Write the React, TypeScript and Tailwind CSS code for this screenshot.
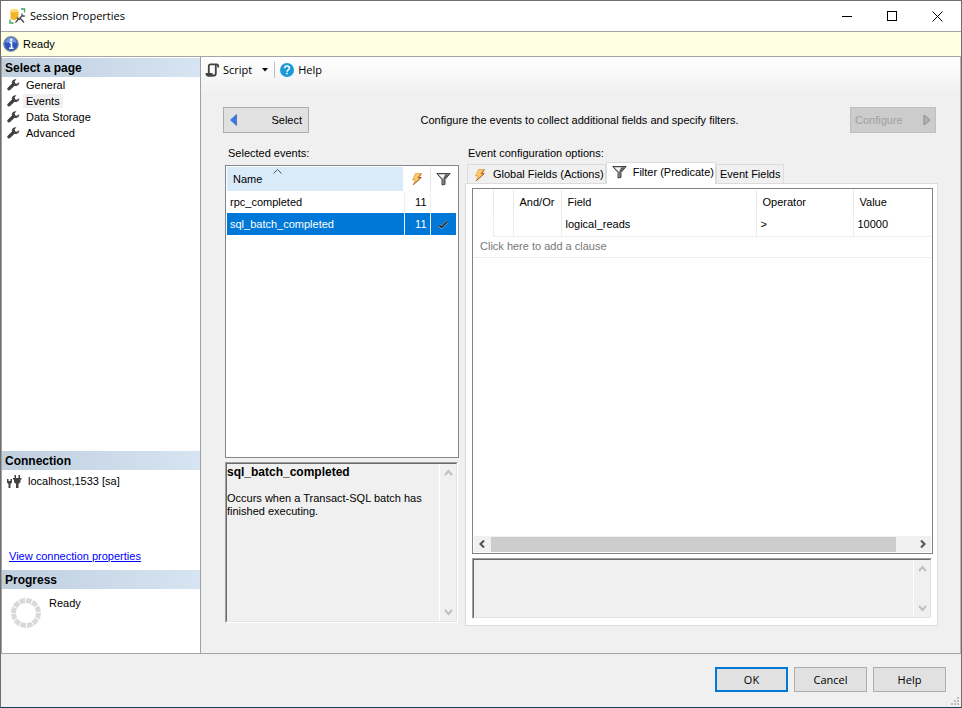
import { useState } from "react";
import clsx from "clsx";

const pages = ["General", "Events", "Data Storage", "Advanced"];

const selectedEvents = [
  { name: "rpc_completed", fields: 11, filtered: false },
  { name: "sql_batch_completed", fields: 11, filtered: true },
];

const clauses = [{ andOr: "", field: "logical_reads", operator: ">", value: "10000" }];

const tabs = [
  { id: "global", label: "Global Fields (Actions)", icon: <BoltIcon /> },
  { id: "filter", label: "Filter (Predicate)", icon: <FunnelIcon /> },
  { id: "fields", label: "Event Fields", icon: null },
];

export default function App() {
  return (
    <div className="flex min-h-screen flex-col border border-[#6e6e6e] border-b-[#1d3f55] bg-[#f0f0f0] font-['Liberation_Sans',Arial,sans-serif] text-[11px] leading-[13px] text-black">
      <TitleBar />
      <div role="status" className="flex h-[26px] items-center gap-1 border-y border-[#a5a5a5] bg-[#ffffe1] px-0.5">
        <InfoIcon />
        <span>Ready</span>
      </div>
      <div className="flex grow border-b border-[#a5a5a5]">
        <Sidebar />
        <main className="flex min-w-0 grow flex-col border-r border-[#b5b5b5] bg-linear-to-b from-white to-[#f0f0f0] to-[38px] pb-[27px]">
          <Toolbar />
          <EventsPage />
        </main>
      </div>
      <Footer />
    </div>
  );
}

function TitleBar() {
  return (
    <header className="flex h-[30px] items-center bg-white pl-2">
      <SessionIcon />
      <h1 className="ml-1 grow font-['Open_Sans',sans-serif] text-[11px] leading-4">Session Properties</h1>
      <button aria-label="Minimize" className="flex h-[30px] w-[45px] items-center justify-center">
        <svg width="10" height="10" stroke="black" shapeRendering="crispEdges"><path d="M0 5.5h10" /></svg>
      </button>
      <button aria-label="Maximize" className="flex h-[30px] w-[45px] items-center justify-center">
        <svg width="10" height="10" stroke="black" fill="none" shapeRendering="crispEdges"><path d="M.5.5h9v9h-9z" /></svg>
      </button>
      <button aria-label="Close" className="flex h-[30px] w-[47px] items-center justify-center">
        <svg width="11" height="11" stroke="black"><path d="M.5.5l10 10M10.5.5l-10 10" /></svg>
      </button>
    </header>
  );
}

function SectionHeader({ children }: { children: React.ReactNode }) {
  return (
    <h2 className="h-[19px] bg-linear-to-r from-[#bfcfde] to-[#d7e4f2] pl-[3px] text-xs leading-[21px] font-bold">
      {children}
    </h2>
  );
}

function Sidebar() {
  const [page, setPage] = useState("Events");

  return (
    <aside className="flex w-[200px] shrink-0 flex-col border-x border-[#a0a0a0] bg-white pt-px">
      <SectionHeader>Select a page</SectionHeader>
      <nav className="grow">
        {pages.map((name) => (
          <button key={name} onClick={() => setPage(name)} className="flex h-4 w-full items-center gap-[3px] pl-[5px]">
            <WrenchIcon />
            <span className={clsx("px-[3px] leading-[14px]", page === name && "bg-[#f0f0f0]")}>{name}</span>
          </button>
        ))}
      </nav>

      <SectionHeader>Connection</SectionHeader>
      <div className="flex h-[100px] flex-col items-start justify-between pt-1 pb-[7px]">
        <p className="flex items-center gap-1.5 pl-[5px]">
          <PlugsIcon />
          <span>localhost,1533 [sa]</span>
        </p>
        <a href="#connection" className="pl-[7px] text-[#0000ff] underline">View connection properties</a>
      </div>

      <SectionHeader>Progress</SectionHeader>
      <div className="flex h-16 gap-[7px] pt-2 pl-2">
        <ProgressRing />
        <span>Ready</span>
      </div>
    </aside>
  );
}

function Toolbar() {
  return (
    <div className="flex h-[26px] items-center pl-1 font-['Open_Sans',sans-serif] text-[11px] leading-4">
      <button className="flex items-center gap-[3px]">
        <ScriptIcon />
        Script
        <svg width="7" height="4" className="ml-[7px]"><path d="M0 0h6L3 3.5z" /></svg>
      </button>
      <span className="mx-[5px] h-4 w-px bg-[#bdbdbd]" />
      <button className="flex items-center gap-1">
        <HelpIcon />
        Help
      </button>
    </div>
  );
}

function EventsPage() {
  return (
    <div className="flex grow flex-col pt-6 pr-[21px] pl-6">
      <div className="flex items-center justify-between">
        <button className="-ml-0.5 flex h-[26px] w-[86px] items-center justify-between border border-[#adadad] bg-[#e1e1e1] px-1.5">
          <svg width="7" height="12"><path d="M6.5.5v11L.5 6z" fill="#3b78e7" stroke="#2350b8" strokeWidth=".6" /></svg>
          Select
        </button>
        <p>Configure the events to collect additional fields and specify filters.</p>
        <button disabled className="mr-[3px] flex h-[26px] w-[86px] items-center justify-between border border-[#bfbfbf] bg-[#cccccc] px-1 text-[#a0a0a0]">
          Configure
          <svg width="8" height="12"><path d="M1 1v10l6-5z" fill="#b4b4b4" stroke="#8b8b8b" /></svg>
        </button>
      </div>

      <div className="flex grow gap-1.5 pt-3.5">
        <section className="flex w-[234px] shrink-0 flex-col">
          <h3 className="h-[18px] pl-[3px]">Selected events:</h3>
          <SelectedEvents />
          <DescriptionBox className="mt-1 mr-px mb-[3px] h-[161px]">
            <p className="text-xs leading-[13px] font-bold">sql_batch_completed</p>
            <p className="mt-[13px]">Occurs when a Transact-SQL batch has finished executing.</p>
          </DescriptionBox>
        </section>
        <section className="flex min-w-0 grow flex-col">
          <h3 className="h-[15px] pl-[3px]">Event configuration options:</h3>
          <ConfigTabs />
        </section>
      </div>
    </div>
  );
}

function SelectedEvents() {
  const [selected, setSelected] = useState("sql_batch_completed");

  return (
    <div className="grow border border-[#828790] bg-white p-px">
      <table className="w-[229px] table-fixed border-collapse">
        <thead>
          <tr className="h-6">
            <th className="relative bg-[#d9ebf9] pl-1.5 text-left font-normal">
              <svg width="9" height="5" className="absolute top-0.5 left-[46px]" fill="none" stroke="#555"><path d="M.5 4.5l4-4 4 4" /></svg>
              Name
            </th>
            <th className="w-[26px] border-l-2 border-white"><BoltIcon className="mx-auto" /></th>
            <th className="w-[26px] border-l border-[#e5e5e5]"><FunnelIcon className="mx-auto" /></th>
          </tr>
        </thead>
        <tbody>
          {selectedEvents.map((event) => (
            <tr
              key={event.name}
              onClick={() => setSelected(event.name)}
              className={clsx("h-[22px]", selected === event.name && "bg-[#0078d7] text-white")}
            >
              <td className="pl-[3px]">{event.name}</td>
              <td className="border-l border-[#f0f0f0] pr-[3px] text-right">{event.fields}</td>
              <td className="border-l border-[#f0f0f0]">{event.filtered && <CheckIcon />}</td>
            </tr>
          ))}
        </tbody>
      </table>
    </div>
  );
}

function DescriptionBox({ className, children }: { className?: string; children?: React.ReactNode }) {
  return (
    <div className={clsx("flex border border-[#a0a0a0] border-r-white border-b-white", className)}>
      <div className="flex grow border border-[#696969] border-r-[#e3e3e3] border-b-[#e3e3e3]">
        <div className="grow pt-0.5">{children}</div>
        <div className="flex w-[17px] shrink-0 flex-col items-center justify-between border-l border-white py-[5px]">
          <button aria-label="Scroll up" disabled><Chevron d="M1 6l3.5-4L8 6" color="#bfbfbf" /></button>
          <button aria-label="Scroll down" disabled><Chevron d="M1 2l3.5 4L8 2" color="#bfbfbf" /></button>
        </div>
      </div>
    </div>
  );
}

function ConfigTabs() {
  const [active, setActive] = useState("filter");

  return (
    <>
      <div role="tablist" className="flex h-[21px] items-end pl-0.5">
        {tabs.map((tab) => (
          <button
            key={tab.id}
            role="tab"
            aria-selected={active === tab.id}
            onClick={() => setActive(tab.id)}
            className={clsx(
              "flex items-center gap-1.5 border border-b-0 border-[#dcdcdc] pt-px whitespace-nowrap",
              tab.icon ? "pr-px pl-[5px]" : "px-[3px]",
              active === tab.id ? "z-10 -mb-px h-[22px] bg-white pb-1" : "h-[19px]",
            )}
          >
            {tab.icon}
            {tab.label}
          </button>
        ))}
      </div>
      <div role="tabpanel" className="mr-px flex grow flex-col border border-[#dcdcdc] bg-white pt-1 pr-[5px] pb-1.5 pl-1.5">
        <FilterGrid />
        <DescriptionBox className="mt-1 h-[61px] bg-[#f0f0f0]" />
      </div>
    </>
  );
}

function FilterGrid() {
  return (
    <div className="-mr-px flex grow flex-col border border-[#828282] p-px">
      <table className="w-full table-fixed border-collapse">
        <thead>
          <tr className="h-[23px] text-left *:border-l *:border-[#e8e8e8] *:pt-px *:pl-1.5 *:font-normal *:first:border-0">
            <th className="w-[19px]" />
            <th className="w-5" />
            <th className="w-12">And/Or</th>
            <th>Field</th>
            <th className="w-[97px]">Operator</th>
            <th className="w-[78px]">Value</th>
          </tr>
        </thead>
        <tbody>
          {clauses.map((clause) => (
            <tr key={clause.field} className="h-[23px] *:border-b *:border-l *:border-[#ececec] *:pt-px *:pl-1 *:first:border-0">
              <td />
              <td />
              <td>{clause.andOr}</td>
              <td>{clause.field}</td>
              <td>{clause.operator}</td>
              <td>{clause.value}</td>
            </tr>
          ))}
          <tr className="h-[21px] border-b border-[#ececec]">
            <td colSpan={6} className="pl-1.5">
              <button className="block text-[#787878]">Click here to add a clause</button>
            </td>
          </tr>
        </tbody>
      </table>

      <div className="mt-auto flex h-4 items-center bg-[#f0f0f0]">
        <button aria-label="Scroll left" className="flex w-[17px] shrink-0 justify-center"><Chevron d="M6 .5L2.5 4 6 7.5" color="#505050" /></button>
        <div className="mr-[18px] h-[15px] grow bg-[#cdcdcd]" />
        <button aria-label="Scroll right" className="flex w-[17px] shrink-0 justify-center"><Chevron d="M3 .5L6.5 4 3 7.5" color="#505050" /></button>
      </div>
    </div>
  );
}

function Footer() {
  return (
    <footer className="relative flex h-[53px] items-start justify-end gap-1.5 pt-[13px] pr-[15px] font-['Open_Sans',sans-serif] text-[11px]">
      <button className="h-[25px] w-[73px] border-2 border-[#0078d7] bg-[#e1e1e1]">OK</button>
      <button className="h-[25px] w-[73px] border border-[#adadad] bg-[#e1e1e1]">Cancel</button>
      <button className="h-[25px] w-[73px] border border-[#adadad] bg-[#e1e1e1]">Help</button>
      <svg width="8" height="8" className="absolute right-0.5 bottom-0.5" fill="#bdbdbd">
        <path d="M6 0h2v2H6zM3 3h2v2H3zM6 3h2v2H6zM0 6h2v2H0zM3 6h2v2H3zM6 6h2v2H6z" />
      </svg>
    </footer>
  );
}

function Chevron({ d, color }: { d: string; color: string }) {
  return (
    <svg width="9" height="8" fill="none" stroke={color} strokeWidth="2"><path d={d} /></svg>
  );
}

function SessionIcon() {
  return (
    <svg width="17" height="16" viewBox="0 0 17 16" className="shrink-0">
      <path d="M1.500 2.500v7.500c0 1.200 1.800 2 4 2s4-.8 4-2V2.500z" fill="#f5b52b" />
      <ellipse cx="5.500" cy="2.500" rx="4" ry="1.800" fill="#ffdc7c" />
      <path d="M12 1h3.500v3.500M1 11.500V15h3.500" fill="none" stroke="#3fa35a" strokeWidth="1.300" />
      <path d="M6.500 14.500l4.500-4.500 4 4.500" fill="none" stroke="#fff" strokeWidth="3" />
      <path d="M6.500 14.500l3.700-4.200M11 10l4 4.500M8 9.200l1 1.800 2 .5" fill="none" stroke="#4a4a4a" strokeWidth="1.300" />
      <path d="M10.500 10.500l3-3M13 5.500v2.500h2.800" fill="none" stroke="#4a4a4a" strokeWidth="1.300" />
    </svg>
  );
}

function InfoIcon() {
  return (
    <svg width="16" height="16" viewBox="0 0 16 16" className="shrink-0">
      <circle cx="8" cy="8" r="7.300" fill="#2c55bd" stroke="#8a93ad" strokeWidth="1.200" />
      <path d="M2.500 7a5.500 5.500 0 0 1 11 0q-5.500-2-11 0z" fill="#7398e2" />
      <path d="M6.300 6.500H8.500V12M6 12.200h4.500" fill="none" stroke="#fff" strokeWidth="1.600" />
      <circle cx="8.200" cy="3.800" r="1.200" fill="#fff" />
    </svg>
  );
}

function WrenchIcon() {
  return (
    <svg width="13" height="12" viewBox="0 0 13 12" className="shrink-0" fill="#424242">
      <path d="M9.500.3C7.500-.2 5 1 4.800 3.200c0 .6 0 .8.200 1.300L.7 8.700c-.7.7-.5 1.700.1 2.300s1.600.8 2.300.1l4.300-4.200c2.500.7 5-.7 5-3.900l-2.300 1.800-2-.5-.4-2z" />
    </svg>
  );
}

function PlugsIcon() {
  return (
    <svg width="15" height="14" viewBox="0 0 15 14" className="shrink-0" fill="#424242">
      <path d="M0 5h1.500v2h2V5H5v3.500L3.500 10v4h-2v-4L0 8.500zM7.500 1H9v3h2.500V1H13v3h1.500v1.500h-1V8l-2 2v4h-2.500v-4L7 8V5.500H6V4h1.500z" />
    </svg>
  );
}

function ProgressRing() {
  return (
    <svg width="32" height="32" viewBox="0 0 32 32" className="shrink-0">
      <circle cx="16" cy="16" r="12.500" fill="none" stroke="#d9d9d9" strokeWidth="5" pathLength="120" strokeDasharray="8.500 1.500" />
    </svg>
  );
}

function ScriptIcon() {
  return (
    <svg width="15" height="14" viewBox="0 0 15 14" className="shrink-0" fill="none" stroke="#424242" strokeWidth="1.800">
      <path d="M13.200 4.500V3c0-1-.5-1.600-1.500-1.600H5.500c-1 0-1.700.6-1.700 1.600v7" />
      <path d="M10.800 2v8.500c0 1.300-.7 2-1.800 2H3" />
      <path d="M.5 10h7v2.200c0 .8.500 1.200 1.500 1.200H2.800C1.300 13.400.5 12 .5 10z" fill="#424242" stroke="none" />
    </svg>
  );
}

function HelpIcon() {
  return (
    <svg width="14" height="14" viewBox="0 0 14 14" className="shrink-0" fill="none">
      <circle cx="7" cy="7" r="7" fill="#1c9ad6" />
      <path d="M4.700 5.300c0-3 4.700-2.800 4.700-.2C9.400 6.800 7 6.800 7 8.700" stroke="#fff" strokeWidth="1.500" />
      <path d="M6.200 9.700h1.600v1.600H6.200z" fill="#fff" />
    </svg>
  );
}

function BoltIcon({ className }: { className?: string }) {
  return (
    <svg width="14" height="14" viewBox="0 0 14 14" className={clsx("shrink-0", className)}>
      <path d="M5.500 1.500h6L9 5.500h2.500L3 13l2.300-5H2.500z" fill="#fccb62" stroke="#d98a35" strokeWidth=".6" />
      <path d="M11.300 1.700L8 5.700h3L3.300 12.700" fill="none" stroke="#a8492c" strokeWidth=".9" />
    </svg>
  );
}

function FunnelIcon({ className }: { className?: string }) {
  return (
    <svg width="15" height="14" viewBox="0 0 15 14" className={clsx("shrink-0", className)}>
      <path d="M.8 1.500h13.400L9 7.500v4.800l-3 .7V7.500z" fill="#a3a3a3" stroke="#333" strokeWidth=".9" />
      <path d="M2.500 2.500h6.500L7 6.500z" fill="#f7f7f7" />
      <path d="M9.500 2.500h3L8.500 7v5H7.500V7z" fill="#555" />
    </svg>
  );
}

function CheckIcon() {
  return (
    <svg width="11" height="9" viewBox="0 0 11 9" className="mx-auto" fill="none">
      <path d="M1 5l2.500 2.300L9.500 1.500" stroke="#8fbbe0" strokeWidth="2.500" />
      <path d="M1 5l2.500 2.300L9.500 1.500" stroke="#1c1c1c" strokeWidth="1.500" />
    </svg>
  );
}
